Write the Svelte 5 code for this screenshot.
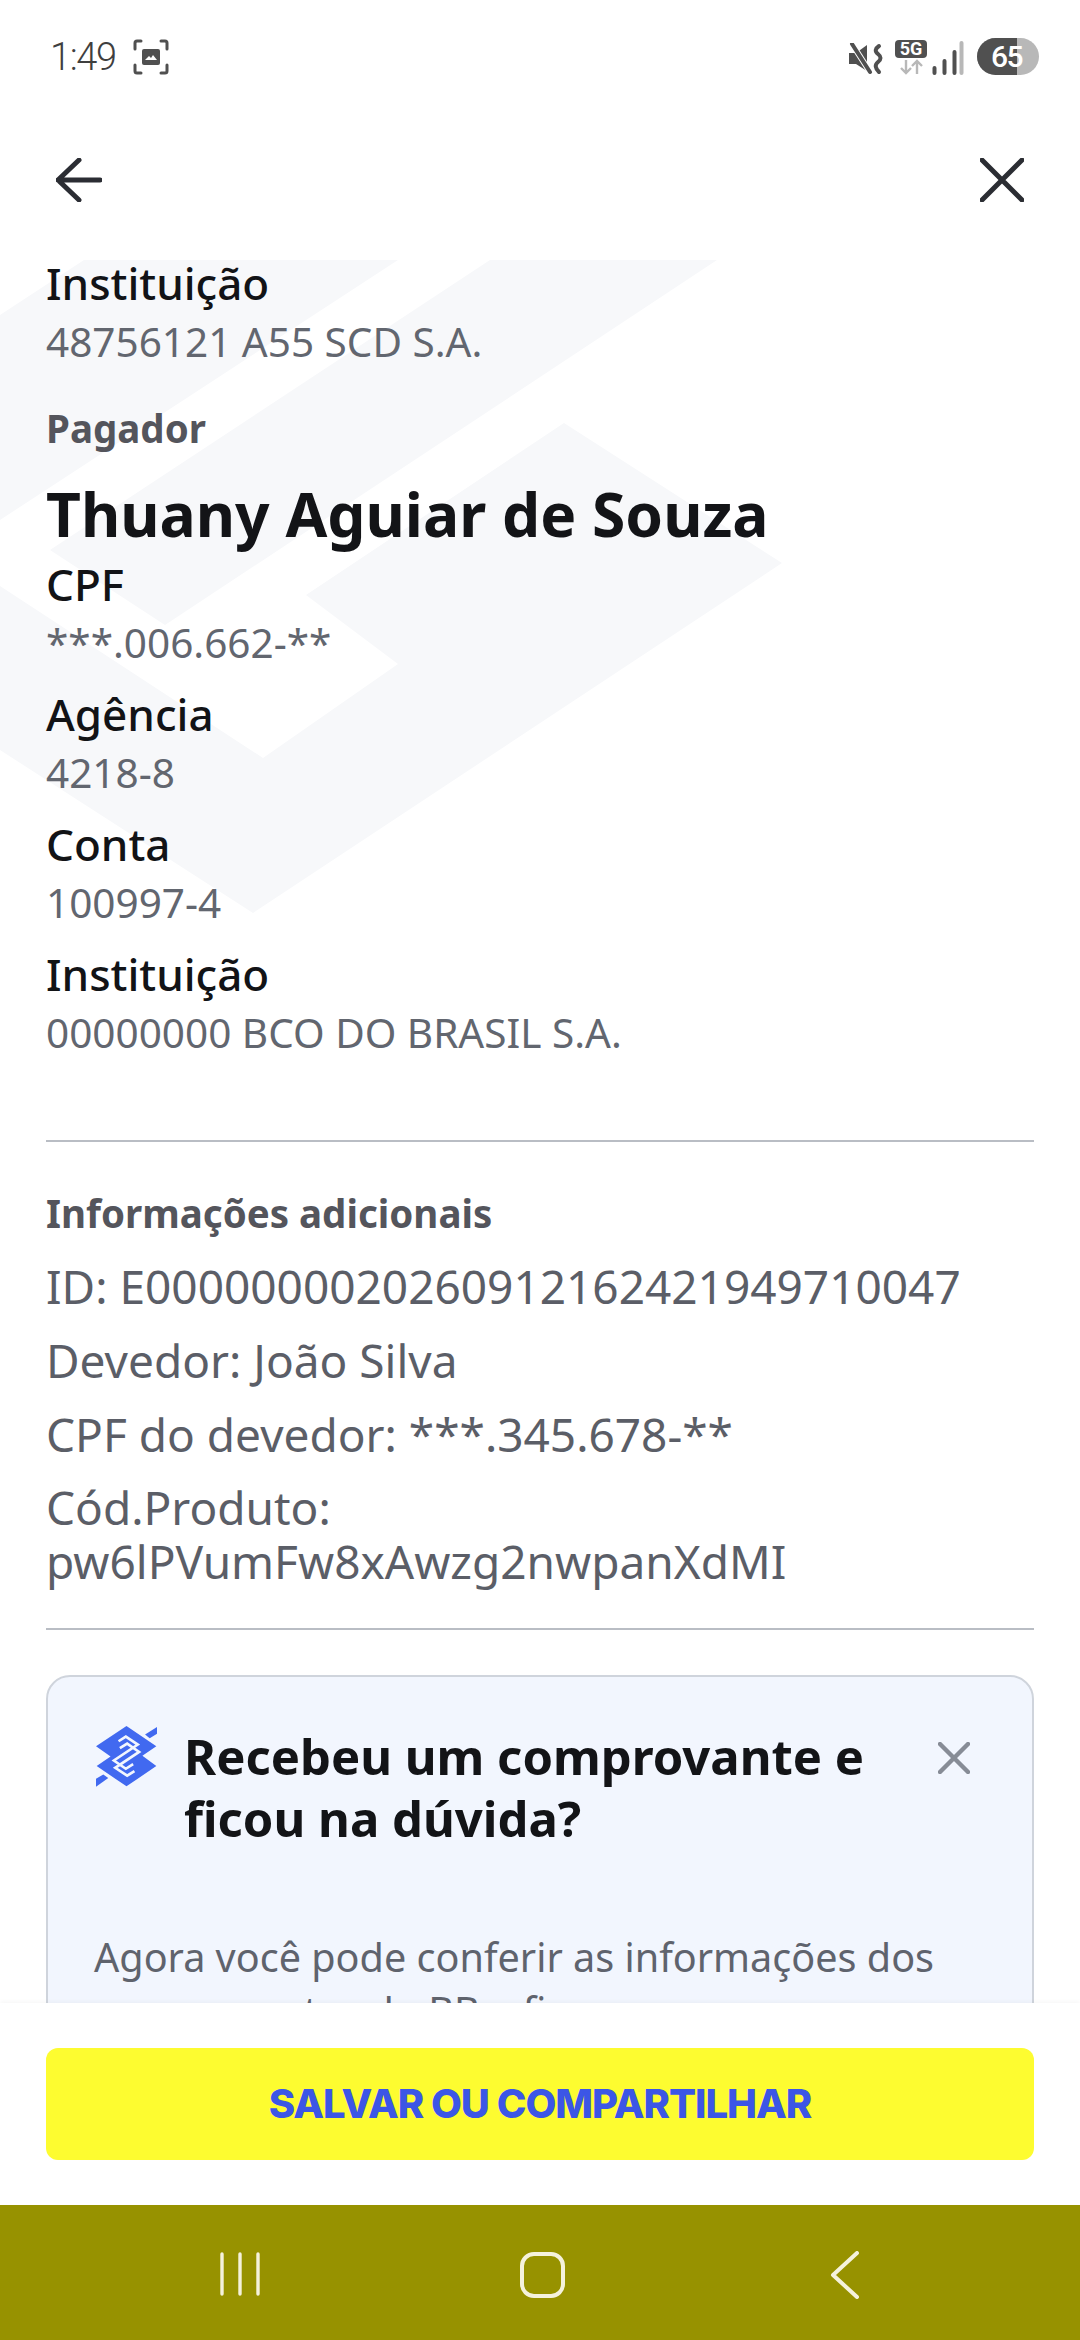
<script>
  const payee = [{ label: 'Instituição', value: '48756121 A55 SCD S.A.' }];
  const payer = [
    { label: 'CPF', value: '***.006.662-**' },
    { label: 'Agência', value: '4218-8' },
    { label: 'Conta', value: '100997-4' },
    { label: 'Instituição', value: '00000000 BCO DO BRASIL S.A.' }
  ];
  const extra = ['ID: E00000000202609121624219497100' + '47', 'Devedor: João Silva', 'CPF do devedor: ***.345.678-**'];
</script>

<div class="screen">
  <div class="status">
    <div class="status-left">
      <span class="time">1:49</span>
      <svg class="shot" viewBox="0 0 36 36" fill="none" stroke="#505050" stroke-width="3" stroke-linecap="round">
        <path d="M8 2H4Q2 2 2 4V10M28 2H32Q34 2 34 4V10M8 34H4Q2 34 2 32V26M28 34H32Q34 34 34 32V26" />
        <rect x="9" y="10" width="18" height="16" rx="2" fill="#505050" stroke="none" />
        <path d="M12 21l4-4 2 2 2-3 4 5z" fill="#fff" stroke="none" />
      </svg>
    </div>
    <div class="status-right">
      <svg class="mute" viewBox="0 0 34 32">
        <path d="M0 10H7L18 2V28L7 21H0Z" fill="#505050" />
        <path d="M3 1L21 29" stroke="#fff" stroke-width="6" />
        <path d="M3 1L21 29" stroke="#505050" stroke-width="4" stroke-linecap="round" />
        <path d="M30 3Q24 7 29 11T29 19T30 29" fill="none" stroke="#505050" stroke-width="4" stroke-linecap="round" />
      </svg>
      <div class="net">
        <span class="five-g">5G</span>
        <svg viewBox="0 0 24 16" fill="none" stroke="#b8b8b8" stroke-width="2.4">
          <path d="M7 1V14M2 9L7 14L12 9" />
          <path d="M18 15V2M13 7L18 2L23 7" />
        </svg>
      </div>
      <svg class="signal" viewBox="0 0 31 34" stroke-width="4" stroke-linecap="round">
        <path d="M2 32V27M12 32V20M22 32V11" stroke="#505050" />
        <path d="M29 32V2" stroke="#b8b8b8" />
      </svg>
      <div class="battery"><span class="fill"></span><span class="pct">65</span></div>
    </div>
  </div>

  <header class="topbar">
    <svg viewBox="0 0 46 44" class="back" fill="none" stroke="#2b2d33" stroke-width="5" stroke-linecap="round" stroke-linejoin="round">
      <path d="M23 2L2 22L23 42M2 22H44" />
    </svg>
    <svg viewBox="0 0 44 44" class="close" fill="none" stroke="#2b2d33" stroke-width="5" stroke-linecap="round">
      <path d="M2 2L42 42M42 2L2 42" />
    </svg>
  </header>

  <main class="scroll">
    <svg class="mark" viewBox="0 0 1080 700" fill="#f7f8fa">
      <polygon points="84,0 398,0 0,260 0,55" />
      <polygon points="490,0 717,0 165,365 50,290" />
      <polygon points="564,163 782,303 253,653 0,490 0,326 263,498 398,404 306,335" />
    </svg>

    <div class="content">
      {#each payee as row}
        <div class="row"><div class="label">{row.label}</div><div class="value">{row.value}</div></div>
      {/each}

      <h3 class="section pagador">Pagador</h3>
      <h2 class="name">Thuany Aguiar de Souza</h2>

      {#each payer as row}
        <div class="row"><div class="label">{row.label}</div><div class="value">{row.value}</div></div>
      {/each}

      <hr class="rule first" />

      <h3 class="section extra-title">Informações adicionais</h3>
      {#each extra as line}
        <p class="extra">{line}</p>
      {/each}
      <p class="extra tight">Cód.Produto:<br />pw6lPVumFw8xAwzg2nwpanXdMI</p>

      <hr class="rule second" />

      <section class="card">
        <div class="card-head">
          <svg class="logo" viewBox="78 82 184 184">
            <path fill="#4169f0" d="M78 143L170 82L260 143L218 172L260 203L170 264L80 203L122 174Z" />
            <path fill="none" stroke="#f2f6fe" stroke-width="8" stroke-linejoin="miter" d="M146 128L168 114L204 138L132 186L168 211L190 197" />
            <path fill="none" stroke="#f2f6fe" stroke-width="8" stroke-linejoin="miter" d="M194 218L172 232L136 208L208 160L172 135L150 149" />
            <polygon fill="#4169f0" points="262,85 262,105 240,119 226,108" />
            <polygon fill="#4169f0" points="78,265 78,241 100,228 115,239" />
          </svg>
          <h4 class="card-title">Recebeu um comprovante e ficou na dúvida?</h4>
          <svg class="card-close" viewBox="0 0 32 32" fill="none" stroke="#878c96" stroke-width="4.4" stroke-linecap="round">
            <path d="M2 2L30 30M30 2L2 30" />
          </svg>
        </div>
        <p class="card-body">Agora você pode conferir as informações dos comprovantes do BB e fique</p>
      </section>
    </div>
  </main>

  <footer class="footer">
    <button class="save">SALVAR OU COMPARTILHAR</button>
  </footer>

  <nav class="nav">
    <svg class="recent" viewBox="0 0 42 44" stroke="#f5f2dc" stroke-width="3.4" stroke-linecap="round">
      <path d="M3 2V42M21 2V42M39 2V42" />
    </svg>
    <span class="home"></span>
    <svg class="nav-back" viewBox="0 0 30 48" fill="none" stroke="#f5f2dc" stroke-width="4" stroke-linecap="round" stroke-linejoin="round">
      <path d="M27 2L3 24L27 46" />
    </svg>
  </nav>
</div>

<style>
  :global(body) { margin: 0; background: #fff; }
  .screen {
    width: 1080px; height: 2340px; display: flex; flex-direction: column;
    font-family: "Noto Sans", "Open Sans", sans-serif; color: #121316; background: #fff; overflow: hidden;
  }
  .status { height: 112px; flex: none; display: flex; justify-content: space-between; align-items: flex-start; padding: 38px 41px 0 50px; box-sizing: border-box; }
  .status-left { display: flex; align-items: center; gap: 17px; height: 38px; }
  .time { font-family: "Roboto", sans-serif; font-weight: 300; font-size: 38px; letter-spacing: -1.4px; color: #3f3f3f; line-height: 38px; }
  .shot { width: 36px; height: 36px; }
  .status-right { display: flex; align-items: flex-start; }
  .mute { width: 34px; height: 32px; margin: 5px 12px 0 0; }
  .net { width: 32px; margin: 2px 5px 0 0; }
  .five-g { display: block; background: #505050; color: #fff; border-radius: 4px; font: 700 18px/18px "Roboto", sans-serif; text-align: center; height: 18px; }
  .net svg { display: block; width: 24px; height: 16px; margin: 1px 0 0 4px; }
  .signal { width: 32px; height: 34px; margin: 3px 13px 0 0; fill: none; }
  .battery { position: relative; width: 62px; height: 37px; border-radius: 19px; background: #b8b8b8; overflow: hidden; }
  .fill { position: absolute; left: 0; top: 0; bottom: 0; width: 40px; background: #505050; }
  .pct { position: absolute; left: 14px; top: 0; font: 500 30px/37px "Roboto", sans-serif; color: #fff; letter-spacing: -1.5px; }

  .topbar { height: 148px; flex: none; display: flex; justify-content: space-between; align-items: flex-start; padding: 46px 56px 0 56px; box-sizing: border-box; }
  .back { width: 46px; height: 44px; }
  .close { width: 44px; height: 44px; }

  .scroll { position: relative; flex: 1; min-height: 0; overflow: hidden; }
  .mark { position: absolute; left: 0; top: 0; width: 1080px; height: 700px; }
  .content { position: relative; padding: 0 46px; }

  .row { margin-bottom: 19px; }
  .label { font-size: 44px; line-height: 46px; padding-bottom: 7px; font-weight: 500; }
  .value { font-size: 40.5px; line-height: 58px; color: #62666f; margin-bottom: 1px; }
  .section { margin: 0; font-size: 38.5px; line-height: 56px; font-weight: 700; color: #54555c; }
  .pagador { margin-top: 29px; }
  .name { margin: 18px 0 7px; font-size: 60.5px; line-height: 80px; font-weight: 700; color: #131417; }
  .rule { border: 0; height: 2px; background: #b9bdc4; margin: 0; }
  .first { margin-top: 78px; }
  .extra-title { margin-top: 43px; }
  .extra { margin: 17px 0 0; font-size: 46px; line-height: 57px; color: #5b5e67; }
  .tight { line-height: 54px; }
  .second { margin-top: 40px; }
  .card { margin-top: 45px; border: 2px solid #cfd4dc; border-radius: 24px; background: #f2f6fe; padding: 48px 46px 60px 46px; }
  .card-head { display: flex; align-items: flex-start; }
  .logo { width: 61px; height: 61px; flex: none; margin: 1px 27px 0 2px; }
  .card-title { margin: 0; flex: 1; font-size: 49px; line-height: 62px; font-weight: 700; color: #131417; }
  .card-close { width: 32px; height: 32px; flex: none; margin: 17px 16px 0 30px; }
  .card-body { margin: 81px 0 0; font-size: 39.6px; line-height: 54px; color: #5f636d; }

  .footer { position: relative; flex: none; height: 202px; padding: 45px 46px 0; box-sizing: border-box; background: #fff; box-shadow: 0 -2px 4px rgba(0,0,0,.03); }
  .save { display: block; width: 100%; height: 112px; border: 0; border-radius: 12px; background: #fdfc30; color: #3c56e6; font: 800 40px/112px "Inter", sans-serif; letter-spacing: -1px; padding: 0; }

  .nav { flex: none; height: 135px; background: #979200; position: relative; }
  .recent { position: absolute; left: 219px; top: 47px; width: 42px; height: 44px; }
  .home { position: absolute; left: 520px; top: 47px; width: 45px; height: 46px; box-sizing: border-box; border: 4px solid #f5f2dc; border-radius: 14px; }
  .nav-back { position: absolute; left: 830px; top: 46px; width: 30px; height: 48px; }
</style>
